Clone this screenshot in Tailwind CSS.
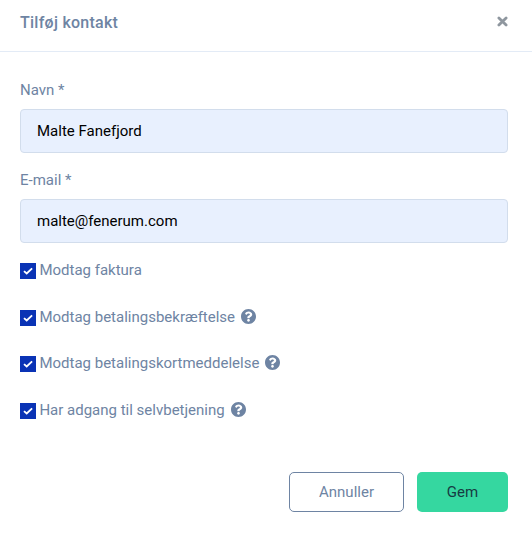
<!DOCTYPE html>
<html lang="da">
<head>
    <meta charset="UTF-8">
    <meta name="viewport" content="width=device-width, initial-scale=1.0">
    <title>Tilføj kontakt</title>
    <script src="https://cdn.jsdelivr.net/npm/@tailwindcss/browser@4"></script>
</head>
<body class="bg-white font-[Roboto,sans-serif] text-[15px] leading-5 text-[#6e84a3] antialiased overflow-hidden">

    <!-- Icons -->
    <svg class="hidden">
        <symbol id="help" viewBox="8 8 496 496">
            <path fill="currentColor" d="M504 256c0 136.997-111.043 248-248 248S8 392.997 8 256C8 119.083 119.043 8 256 8s248 111.083 248 248zM262.655 90c-54.497 0-89.255 22.957-116.549 63.758-3.536 5.286-2.353 12.415 2.715 16.258l34.699 26.31c5.205 3.947 12.621 3.008 16.665-2.122 17.864-22.658 30.113-35.797 57.303-35.797 20.429 0 45.698 13.148 45.698 32.958 0 14.976-12.363 22.667-32.534 33.976C247.128 238.528 216 254.941 216 296v4c0 6.627 5.373 12 12 12h56c6.627 0 12-5.373 12-12v-1.333c0-28.462 83.186-29.647 83.186-106.667 0-58.002-60.165-102-116.531-102zM256 338c-25.365 0-46 20.635-46 46 0 25.364 20.635 46 46 46s46-20.636 46-46c0-25.365-20.635-46-46-46z"/>
        </symbol>
        <symbol id="check" viewBox="0 0 16 16">
            <path fill="none" stroke="#fff" stroke-width="1.9" d="M4 8.1l2.7 2.3L12.1 5.4"/>
        </symbol>
    </svg>

    <header class="flex items-start justify-between h-[52px] pl-5 pr-6 pt-3 border-b border-[#e3ebf6]">
        <h1 class="mt-px text-base leading-5 font-medium tracking-[0.26px]">Tilføj kontakt</h1>
        <button type="button" class="mt-[4px] text-[#8f979f]" aria-label="Luk">
            <svg class="block w-[11px] h-[11px]" viewBox="0 0 11 11" fill="none" stroke="currentColor" stroke-width="2.8" stroke-linecap="round">
                <path d="M1.9 1.9l7.2 7.2M9.1 1.9L1.9 9.1"/>
            </svg>
        </button>
    </header>

    <form class="pl-5 pr-6 pt-7">
        <label for="name" class="block h-[29px]">Navn *</label>
        <input id="name" type="text" value="Malte Fanefjord" class="block w-full h-11 px-4 rounded-[4px] border border-[#d2ddec] bg-[#e8f0fe] text-black">

        <label for="email" class="block h-[29px] mt-[17px]">E-mail *</label>
        <input id="email" type="text" value="malte@fenerum.com" class="block w-full h-11 px-4 rounded-[4px] border border-[#d2ddec] bg-[#e8f0fe] text-black">

        <div class="mt-[17px] flex flex-col gap-[26.7px]">
            <div class="flex h-5">
                <svg class="w-4 h-4 mt-[3px] mr-[3.4px] bg-[#0a33b5]"><use href="#check"/></svg>
                <span>Modtag faktura</span>
            </div>
            <div class="flex h-5">
                <svg class="w-4 h-4 mt-[3px] mr-[3.4px] bg-[#0a33b5]"><use href="#check"/></svg>
                <span>Modtag betalingsbekræftelse</span>
                <svg class="w-[15px] h-[15px] mt-[2px] ml-[6px]"><use href="#help"/></svg>
            </div>
            <div class="flex h-5">
                <svg class="w-4 h-4 mt-[3px] mr-[3.4px] bg-[#0a33b5]"><use href="#check"/></svg>
                <span>Modtag betalingskortmeddelelse</span>
                <svg class="w-[15px] h-[15px] mt-[2px] ml-[5.6px]"><use href="#help"/></svg>
            </div>
            <div class="flex h-5">
                <svg class="w-4 h-4 mt-[3px] mr-[3.4px] bg-[#0a33b5]"><use href="#check"/></svg>
                <span>Har adgang til selvbetjening</span>
                <svg class="w-[15px] h-[15px] mt-[2px] ml-[6px]"><use href="#help"/></svg>
            </div>
        </div>

        <div class="mt-[52px] flex justify-end gap-[13px]">
            <button type="button" class="w-[115px] h-10 rounded-[5px] border border-[#6e84a3]">Annuller</button>
            <button type="submit" class="w-[91px] h-10 rounded-[5px] bg-[#35d7a0] text-[#173b43]">Gem</button>
        </div>
    </form>

</body>
</html>
